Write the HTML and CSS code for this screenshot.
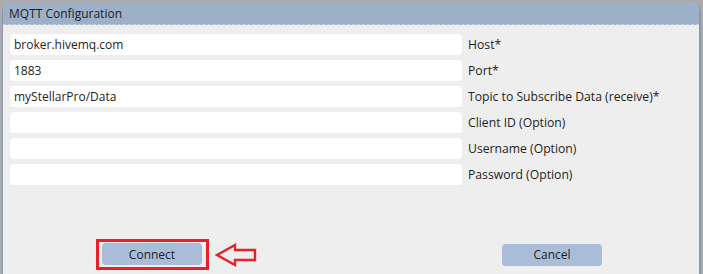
FILE: index.html
```html
<!DOCTYPE html>
<html lang="en">
<head>
    <meta charset="UTF-8">
    <title>MQTT Configuration</title>
    <link rel="stylesheet" href="styles.css">
</head>
<body>
    <div class="window">
        <div class="title-bar">MQTT Configuration</div>

        <div class="content">
            <div class="form">
                <input type="text" value="broker.hivemq.com" aria-label="Host">
                <label>Host*</label>

                <input type="text" value="1883" aria-label="Port">
                <label>Port*</label>

                <input type="text" value="myStellarPro/Data" aria-label="Topic">
                <label>Topic to Subscribe Data (receive)*</label>

                <input type="text" aria-label="Client ID">
                <label>Client ID (Option)</label>

                <input type="text" aria-label="Username">
                <label>Username (Option)</label>

                <input type="text" aria-label="Password">
                <label>Password (Option)</label>
            </div>

            <div class="actions">
                <div class="highlight">
                    <button class="btn">Connect</button>
                </div>
                <svg class="arrow" width="44" height="24" viewBox="0 0 44 24">
                    <polygon points="2,12 20,2 20,7 40,7 40,17 20,17 20,22" fill="none" stroke="#e8202a" stroke-width="2.4" stroke-linejoin="miter"/>
                </svg>
                <button class="btn cancel">Cancel</button>
            </div>
        </div>
    </div>
</body>
</html>
```

FILE: styles.css
```css
html, body {
    height: 100%;
}

body {
    margin: 0;
    background-color: #a9abb0;
    font-family: "Open Sans", "Noto Sans", sans-serif;
    font-size: 12px;
    color: #1e1e1e;
}

.window {
    box-sizing: border-box;
    height: calc(100% - 3px);
    margin: 3px 0 0 2px;
    width: 699px;
    display: flex;
    flex-direction: column;
    background-color: #eeeeee;
    border-left: 1px solid #8d97a8;
    border-right: 2px solid #8d97a8;
    border-top-left-radius: 7px;
    border-top-right-radius: 9px;
    overflow: hidden;
}

.title-bar {
    height: 22px;
    line-height: 22px;
    padding-left: 6px;
    background-color: #9cb0c8;
    border-bottom: 1px dashed #c4d0de;
    box-sizing: border-box;
}

.content {
    flex: 1;
    display: flex;
    flex-direction: column;
    padding: 9px 0 4px 7px;
}

.form {
    display: grid;
    grid-template-columns: 452px auto;
    column-gap: 6px;
    row-gap: 5px;
    align-items: center;
}

.form input {
    box-sizing: border-box;
    height: 21px;
    border: none;
    border-radius: 4px;
    background-color: #fff;
    padding: 0 4px;
    font-family: inherit;
    font-size: 12px;
    color: #1e1e1e;
    outline: none;
}

.form label {
    line-height: 21px;
    font-size: 12.2px;
}

.actions {
    margin-top: auto;
    display: flex;
    align-items: center;
    padding-left: 86px;
}

.highlight {
    border: 3px solid #e8202a;
    padding: 1px 4px 2px 3px;
}

.btn {
    display: block;
    width: 100px;
    height: 22px;
    border: none;
    border-radius: 4px;
    background-color: #a9bdd8;
    font-family: inherit;
    font-size: 12px;
    color: #1e1e1e;
    cursor: pointer;
}

.arrow {
    margin-left: 6px;
    margin-top: 1px;
}

.cancel {
    margin-left: 243px;
}
```
